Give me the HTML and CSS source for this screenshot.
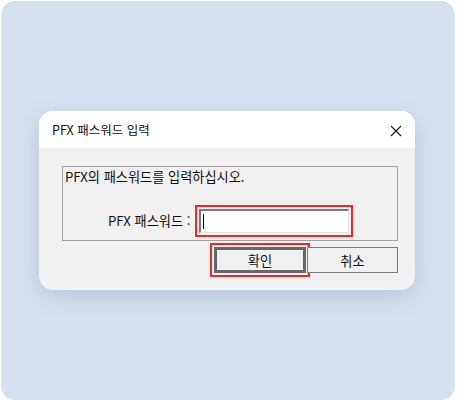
FILE: index.html
```html
<!DOCTYPE html>
<html lang="ko">
<head>
<meta charset="utf-8">
<link rel="stylesheet" href="styles.css">
</head>
<body>
<div class="panel">
  <div class="dialog">
    <div class="titlebar">
      <span class="title">PFX 패스워드 입력</span>
      <svg class="close" width="12" height="12" viewBox="0 0 12 12"><path d="M1 1 L11 11 M11 1 L1 11" stroke="#1a1a1a" stroke-width="1.1" fill="none"/></svg>
    </div>
    <div class="body">
      <div class="group">
        <div class="prompt">PFX의 패스워드를 입력하십시오.</div>
        <div class="row">
          <span class="label">PFX 패스워드 :</span>
          <div class="input hl"><span class="caret"></span></div>
        </div>
      </div>
      <div class="buttons">
        <div class="btn default hl">확인</div>
        <div class="btn">취소</div>
      </div>
    </div>
  </div>
</div>
</body>
</html>
```
FILE: styles.css
```css
html, body {
  margin: 0;
  background: #ffffff;
}
body {
  padding: 1px 0 0 1px;
  font-family: "Noto Sans CJK KR", "Noto Sans", sans-serif;
  color: #111;
}
.panel {
  width: 454px;
  height: 399px;
  box-sizing: border-box;
  border-radius: 14px;
  background: #d6e1ef;
  padding: 110px 0 0 38px;
}
.dialog {
  width: 376px;
  height: 179px;
  border-radius: 14px;
  background: #f0f0f0;
  overflow: hidden;
  box-shadow: 0 6px 22px rgba(70, 100, 150, 0.22);
  display: flex;
  flex-direction: column;
}
.titlebar {
  height: 37px;
  flex: none;
  background: #ffffff;
  display: flex;
  align-items: center;
  justify-content: space-between;
  padding: 0 13px 0 13px;
}
.title {
  font-size: 12.5px;
  line-height: 16px;
  margin-top: 1px;
}
.close {
  margin-top: 2px;
}
.body {
  padding: 18px 17px 0 23px;
}
.group {
  height: 75px;
  box-sizing: border-box;
  border: 1px solid #a0a0a0;
  padding: 2px 0 0 2px;
}
.prompt {
  font-size: 13.2px;
  line-height: 16px;
}
.row {
  display: flex;
  align-items: center;
  margin-top: 24px;
  padding-left: 43px;
  gap: 9px;
}
.label {
  font-size: 13.2px;
  line-height: 16px;
}
.input {
  width: 150px;
  height: 24px;
  box-sizing: border-box;
  background: #fff;
  border-style: solid;
  border-width: 2px 1px 1px 2px;
  border-color: #7a7a7a #e3e3e3 #e3e3e3 #7a7a7a;
  display: flex;
  align-items: center;
  padding-left: 2px;
}
.caret {
  width: 1px;
  height: 15px;
  background: #000;
}
.hl {
  outline: 2px solid #f22424;
  outline-offset: 2px;
  border-radius: 3px;
}
.input.hl {
  border-radius: 0;
  outline-offset: 2px;
}
.buttons {
  display: flex;
  justify-content: flex-end;
  gap: 1px;
  margin-top: 6px;
}
.btn {
  width: 91px;
  height: 26px;
  box-sizing: border-box;
  border: 1px solid #7a7a7a;
  background: #f0f0f0;
  font-size: 13.2px;
  display: flex;
  align-items: center;
  justify-content: center;
}
.btn.default {
  width: 92px;
  border: 3px solid #676767;
  border-radius: 0;
}
```
